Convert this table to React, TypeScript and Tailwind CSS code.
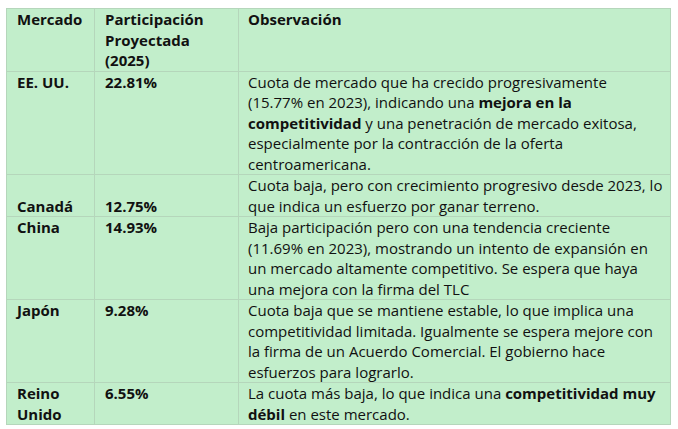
import React from "react";

type Row = {
  mercado: React.ReactNode;
  valor: string;
  obs: React.ReactNode;
  bottom?: boolean;
};

const rows: Row[] = [
  {
    mercado: "EE. UU.",
    valor: "22.81%",
    obs: (
      <>
        Cuota de mercado que ha crecido progresivamente
        <br />
        (15.77% en 2023), indicando una <b>mejora en la</b>
        <br />
        <b>competitividad</b> y una penetración de mercado exitosa,
        <br />
        especialmente por la contracción de la oferta
        <br />
        centroamericana.
      </>
    ),
  },
  {
    mercado: "Canadá",
    valor: "12.75%",
    obs: (
      <>
        Cuota baja, pero con crecimiento progresivo desde 2023, lo
        <br />
        que indica un esfuerzo por ganar terreno.
      </>
    ),
    bottom: true,
  },
  {
    mercado: "China",
    valor: "14.93%",
    obs: "Baja participación pero con una tendencia creciente (11.69% en 2023), mostrando un intento de expansión en un mercado altamente competitivo. Se espera que haya una mejora con la firma del TLC",
  },
  {
    mercado: "Japón",
    valor: "9.28%",
    obs: "Cuota baja que se mantiene estable, lo que implica una competitividad limitada. Igualmente se espera mejore con la firma de un Acuerdo Comercial. El gobierno hace esfuerzos para lograrlo.",
  },
  {
    mercado: "Reino Unido",
    valor: "6.55%",
    obs: (
      <>
        La cuota más baja, lo que indica una <b>competitividad muy débil</b> en este mercado.
      </>
    ),
  },
];

export default function App() {
  const cell = "border border-[#b5d6bb] px-[10px] py-0 align-top";
  const obsCell = "border border-[#b5d6bb] pl-[9px] pr-[3px] py-0 align-top whitespace-nowrap";
  const obsWrap = "border border-[#b5d6bb] pl-[9px] pr-[3px] py-0 align-top";
  return (
    <div className="min-h-[429px] bg-white pl-[6px] pt-[8px] font-['Open_Sans',sans-serif] text-[15px] leading-[20.5px] text-[#111]">
      <table className="w-[664px] table-fixed border-collapse bg-[#c2eecb]">
        <colgroup>
          <col className="w-[88px]" />
          <col className="w-[144px]" />
          <col className="w-[432px]" />
        </colgroup>
        <thead>
          <tr className="text-left font-bold">
            <th className={cell}>Mercado</th>
            <th className={cell}>Participación Proyectada (2025)</th>
            <th className={obsWrap}>Observación</th>
          </tr>
        </thead>
        <tbody>
          {rows.map((r, i) => (
            <tr key={i}>
              <td className={`${cell} font-bold ${r.bottom ? "!align-bottom" : ""}`}>{r.mercado}</td>
              <td className={`${cell} font-bold ${r.bottom ? "!align-bottom" : ""}`}>{r.valor}</td>
              <td className={i < 2 ? obsCell : obsWrap}>{r.obs}</td>
            </tr>
          ))}
        </tbody>
      </table>
    </div>
  );
}
